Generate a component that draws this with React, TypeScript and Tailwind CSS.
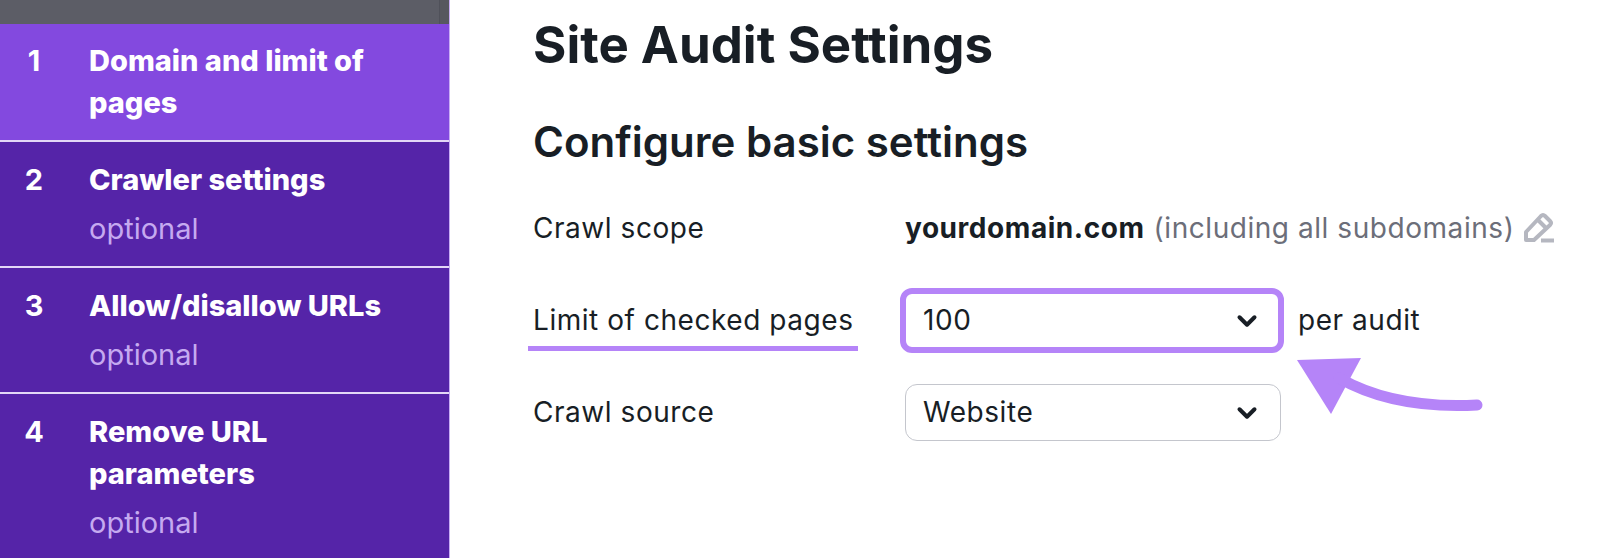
import React from 'react';
import { ChevronDown } from 'lucide-react';

const steps = [
  { n: 1, title: ['Domain and limit of', 'pages'], active: true },
  { n: 2, title: ['Crawler settings'], optional: true },
  { n: 3, title: ['Allow/disallow URLs'], optional: true },
  { n: 4, title: ['Remove URL', 'parameters'], optional: true },
];

function Arrow() {
  return (
    <svg className="absolute left-[1289px] top-[350px]" width="200" height="72" viewBox="0 0 200 72" fill="none">
      <path d="M8 10 L72 8 L42 64 Z" fill="#b584f8" />
      <path d="M50 28 C85 48 130 58 188 55" stroke="#b584f8" strokeWidth="11" strokeLinecap="round" />
    </svg>
  );
}

function PencilIcon() {
  return (
    <svg width="32" height="32" viewBox="0 0 32 32" fill="none" stroke="#b5b7c0" strokeWidth="4" className="ml-[9px] mt-[-2px]">
      <path d="M3 29 V21 L18 5 Q20 3 22 5 L27 10 Q29 12 27 14 L11 29 Z" strokeLinejoin="round" />
      <path d="M15 9 L24 18" />
      <path d="M18 29.5 H31" />
    </svg>
  );
}

export default function App() {
  return (
    <div className="relative flex h-[558px] w-[1600px] overflow-hidden bg-white font-['Inter',sans-serif] text-[#181e25]">
      <aside className="flex h-full w-[450px] shrink-0 flex-col border-r border-[#c9aef5] bg-[#5524a8]">
        <div className="flex h-[24px] shrink-0 justify-end bg-[#5c5d66]">
          <div className="w-[10px] border-l border-[#50515a] bg-[#57585f]" />
        </div>
        {steps.map((s) => (
          <div
            key={s.n}
            className={`flex border-b-2 border-[#e3d7f7] pl-[20px] last:border-b-0 ${s.active ? 'bg-[#8349df] pb-[16px] pt-[16px]' : 'pb-[14px] pt-[17px]'}`}
          >
            <span className="mr-[41px] w-[28px] text-center text-[29px] font-bold leading-[42px] text-white">{s.n}</span>
            <div>
              {s.title.map((t) => (
                <div key={t} className="text-[29px] font-extrabold leading-[42px] text-white">{t}</div>
              ))}
              {s.optional && <div className="mb-[2px] mt-[7px] text-[29px] leading-[42px] text-[#c5aaf0]">optional</div>}
            </div>
          </div>
        ))}
      </aside>
      <main className="flex-1 pl-[83px]">
        <h1 className="mt-[16px] text-[51px] font-bold leading-[58px]">Site Audit Settings</h1>
        <h2 className="mt-[43px] text-[42px] font-semibold leading-[50px]">Configure basic settings</h2>
        <div className="mt-[33px] flex h-[56px] items-center text-[28px] tracking-[0.55px]">
          <span className="w-[372px]">Crawl scope</span>
          <span className="font-bold">yourdomain.com</span>
          <span className="ml-[9px] text-[#6c6e79]">(including all subdomains)</span>
          <PencilIcon />
        </div>
        <div className="mt-[32px] flex h-[65px] items-center text-[28px] tracking-[0.55px]">
          <span className="-ml-[5px] mr-[42px] w-[330px] border-b-[5px] border-[#b584f8] pl-[5px] pb-[6px] pt-[9px] leading-[40px]">Limit of checked pages</span>
          <div className="flex h-[65px] w-[384px] items-center justify-between rounded-[12px] border-[6px] border-[#b584f8] pl-[17px] pr-[16px]">
            <span className="pb-[2px]">100</span>
            <ChevronDown size={30} strokeWidth={3.2} />
          </div>
          <span className="ml-[14px] pb-[2px]">per audit</span>
        </div>
        <div className="mt-[31px] flex h-[57px] items-center text-[28px] tracking-[0.55px]">
          <span className="w-[372px] pb-[2px]">Crawl source</span>
          <div className="flex h-[57px] w-[376px] items-center justify-between rounded-[12px] border-[1.5px] border-[#c4c6cd] pl-[17px] pr-[18px]">
            <span className="pb-[2px]">Website</span>
            <ChevronDown size={30} strokeWidth={3.2} />
          </div>
        </div>
      </main>
      <Arrow />
    </div>
  );
}
